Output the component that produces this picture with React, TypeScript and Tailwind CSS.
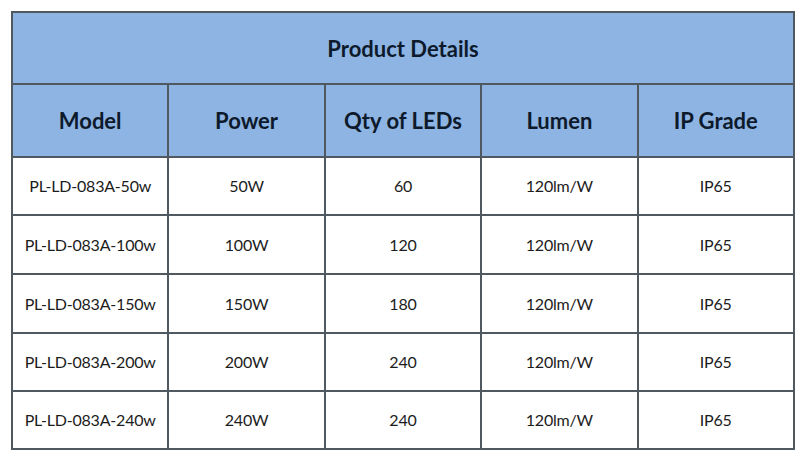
import React from "react";

const rows = [
  ["PL-LD-083A-50w", "50W", "60", "120lm/W", "IP65"],
  ["PL-LD-083A-100w", "100W", "120", "120lm/W", "IP65"],
  ["PL-LD-083A-150w", "150W", "180", "120lm/W", "IP65"],
  ["PL-LD-083A-200w", "200W", "240", "120lm/W", "IP65"],
  ["PL-LD-083A-240w", "240W", "240", "120lm/W", "IP65"],
];
const heads = ["Model", "Power", "Qty of LEDs", "Lumen", "IP Grade"];
const rowH = ["h-[58px]", "h-[59px]", "h-[59px]", "h-[58px]", "h-[58px]"];

export default function App() {
  return (
    <div className="w-[800px] h-[455px] bg-white pt-[11px] pl-[11px]" style={{ fontFamily: "Lato, 'Open Sans', sans-serif" }}>
      <table className="w-[784px] border-collapse table-fixed border-2 border-[#505860]">
        <tbody>
          <tr className="h-[72px] bg-[#8db4e2]">
            <td colSpan={5} className="border-2 border-[#505860] text-center text-[22px] font-bold text-[#0d1a2c]">
              Product Details
            </td>
          </tr>
          <tr className="h-[73px] bg-[#8db4e2]">
            {heads.map((h) => (
              <td key={h} className="border-2 border-[#505860] text-center text-[22px] font-bold text-[#0d1a2c]">
                {h}
              </td>
            ))}
          </tr>
          {rows.map((r, i) => (
            <tr key={i} className={rowH[i]}>
              {r.map((c, j) => (
                <td key={j} className="border-2 border-[#505860] text-center text-[16px] tracking-[-0.2px] text-[#1c1c1c]">
                  {c}
                </td>
              ))}
            </tr>
          ))}
        </tbody>
      </table>
    </div>
  );
}
